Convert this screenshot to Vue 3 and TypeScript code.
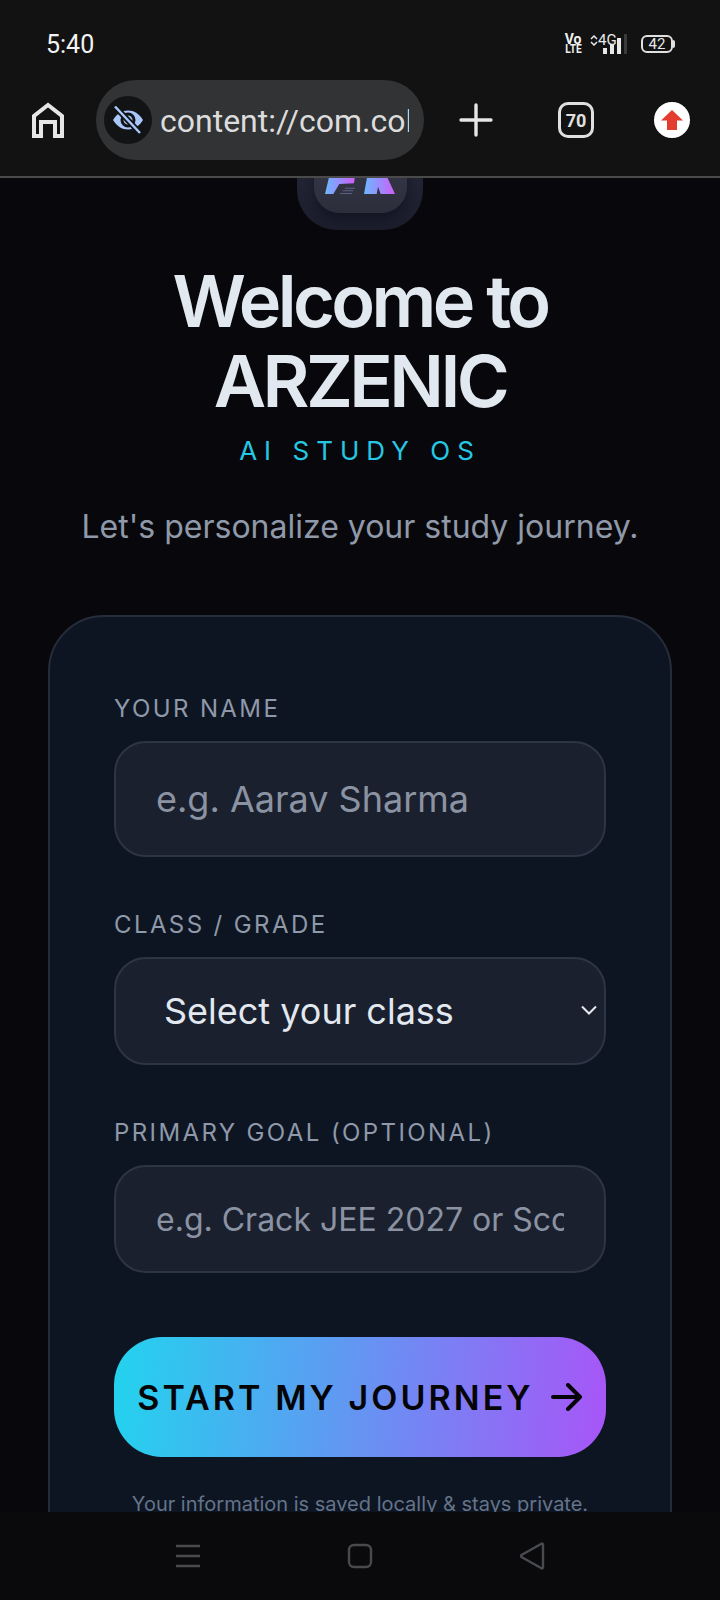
<template>
	<div class="phone">
		<!-- 상단 브라우저 바 -->
		<header class="browser">
			<div class="status">
				<span class="clock">5:40</span>
				<div class="indicators">
					<span class="volte"><b>Vo</b><b class="lte">LTE</b></span>
					<span class="updown">
						<svg width="8" height="11" viewBox="0 0 8 11"><path d="M1 4 4 1l3 3M1 7l3 3 3-3" fill="none" stroke="#e8e8e8" stroke-width="1.500" /></svg>
					</span>
					<div class="net">
						<span class="net-label">4G</span>
						<div class="bars">
							<i v-for="b in signalBars" :key="b" :style="{ height: b + 'px' }"></i>
						</div>
					</div>
					<i class="bar-off"></i>
					<div class="battery"><span>42</span></div>
				</div>
			</div>
			<div class="toolbar">
				<button class="tool home" aria-label="Home">
					<svg width="32" height="36" viewBox="0 0 32 36">
						<path d="M2 34V14L16 3l14 11v20h-7V20H9v14H2Z" fill="none" stroke="#e6e6e6" stroke-width="4" />
					</svg>
				</button>
				<div class="url">
					<span class="eye">
						<svg width="32" height="28" viewBox="0 0 32 28">
							<path d="M1 14C5 7.500 10 4.500 16 4.500S27 7.500 31 14c-4 6.500-9 9.500-15 9.500S5 20.500 1 14Z" fill="#a9c7fb" />
							<circle cx="16" cy="14" r="6" fill="none" stroke="#111315" stroke-width="3" />
							<path d="M3 0.500 28 27" stroke="#111315" stroke-width="6" />
							<path d="M3 0.500 28 27" stroke="#a9c7fb" stroke-width="2.400" />
						</svg>
					</span>
					<div class="url-text">content://com.col</div>
				</div>
				<button class="tool plus" aria-label="New tab">
					<svg width="34" height="34" viewBox="0 0 34 34">
						<path d="M17 2v30M2 17h30" stroke="#e6e6e6" stroke-width="3.400" stroke-linecap="round" />
					</svg>
				</button>
				<div class="tabs">70</div>
				<button class="tool update" aria-label="Update">
					<svg width="22" height="20" viewBox="0 0 22 20">
						<path d="M11 0 22 10.500H16V20H6V10.500H0Z" fill="#e23d2e" />
					</svg>
				</button>
			</div>
		</header>

		<!-- 온보딩 페이지 (스크롤된 상태) -->
		<main class="viewport">
			<div class="page">
				<div class="logo">
					<div class="logo-inner">
						<svg width="70" height="18" viewBox="0 0 70 18">
							<defs>
								<linearGradient id="lg" x1="0" y1="0" x2="1" y2="0">
									<stop offset="0" stop-color="#6db8ff" />
									<stop offset="0.5" stop-color="#9a8cff" />
									<stop offset="1" stop-color="#d05ef5" />
								</linearGradient>
							</defs>
							<path d="M4.300 0H30l-1 7.300-14.700.7L8.300 18H0Z" fill="url(#lg)" />
							<path d="M42.300 0h19.400L70 18H55.700L53 10.700 51.700 18H39Z" fill="url(#lg)" />
							<path d="M20 12.300h10M17.700 14.700H28M15 17.500h12" stroke="#5d5f86" stroke-width="1" />
						</svg>
					</div>
				</div>
				<h1 class="title">Welcome to<br />ARZENIC</h1>
				<p class="brand">AI STUDY OS</p>
				<p class="lead">Let's personalize your study journey.</p>

				<form class="card" @submit.prevent>
					<div class="field first">
						<label for="name">YOUR NAME</label>
						<input id="name" v-model="name" class="control tall big" type="text" placeholder="e.g. Aarav Sharma" />
					</div>
					<div class="field">
						<label for="grade">CLASS / GRADE</label>
						<div class="select-wrap">
							<select id="grade" v-model="grade" class="control big">
								<option value="">Select your class</option>
								<option v-for="g in grades" :key="g" :value="g">{{ g }}</option>
							</select>
							<svg class="chevron" width="18" height="12" viewBox="0 0 18 12">
								<path d="M2 2.500 9 9.500l7-7" fill="none" stroke="#e6e8ee" stroke-width="2" />
							</svg>
						</div>
					</div>
					<div class="field">
						<label for="goal">PRIMARY GOAL (OPTIONAL)</label>
						<input id="goal" v-model="goal" class="control" type="text" placeholder="e.g. Crack JEE 2027 or Score 95%" />
					</div>
					<button class="start" type="submit">
						<span>START MY JOURNEY</span>
						<svg width="32" height="28" viewBox="0 0 32 28">
							<path d="M2 14h27M17 2l12 12-12 12" fill="none" stroke="#050508" stroke-width="4" stroke-linecap="round" stroke-linejoin="round" />
						</svg>
					</button>
					<p class="note">Your information is saved locally &amp; stays private.</p>
				</form>
			</div>
		</main>

		<!-- 시스템 내비게이션 -->
		<nav class="sysnav">
			<svg width="26" height="24" viewBox="0 0 26 24">
				<path d="M1 2h24M1 12h24M1 22h24" stroke="#484a4e" stroke-width="2.400" />
			</svg>
			<svg width="26" height="26" viewBox="0 0 26 26">
				<rect x="2" y="2" width="22" height="22" rx="5" fill="none" stroke="#484a4e" stroke-width="2.400" />
			</svg>
			<svg width="26" height="28" viewBox="0 0 26 28">
				<path d="M24 2.500v23a1 1 0 0 1-1.600.700L2.500 15a1.300 1.300 0 0 1 0-2L22.400 1.800A1 1 0 0 1 24 2.500Z" fill="none" stroke="#484a4e" stroke-width="2.400" />
			</svg>
		</nav>
	</div>
</template>

<script setup lang="ts">
import { ref } from 'vue';

const name = ref('');
const grade = ref('');
const goal = ref('');

const signalBars = [6, 10, 16];
const grades = ['Class 9', 'Class 10', 'Class 11', 'Class 12', 'Dropper'];
</script>

<style>
html,
body {
	margin: 0;
	background: #08080c;
}
</style>

<style scoped>
.phone {
	width: 720px;
	height: 1600px;
	display: flex;
	flex-direction: column;
	overflow: hidden;
	font-family: Inter, 'Liberation Sans', sans-serif;
	background: #08080c;
}

.browser {
	flex: none;
	height: 178px;
	box-sizing: border-box;
	background: #121212;
	border-bottom: 2px solid #4a4a4a;
	font-family: Roboto, 'Liberation Sans', sans-serif;
	color: #e8e8e8;
}

.status {
	height: 80px;
	display: flex;
	align-items: center;
	justify-content: space-between;
	padding: 8px 47px 0 46px;
	box-sizing: border-box;
}

.clock {
	font-size: 25px;
	color: #f2f2f2;
}

.indicators {
	display: flex;
	align-items: center;
	height: 20px;
}

.volte {
	width: 16px;
	margin-right: 9px;
	display: flex;
	flex-direction: column;
	align-items: center;
	font-size: 14px;
	line-height: 10px;
	color: #f0f0f0;
}

.lte {
	font-size: 13px;
	transform: scaleX(0.78);
}

.updown {
	display: flex;
	margin-bottom: 7px;
}

.net {
	width: 23px;
	height: 20px;
}

.net-label {
	display: block;
	font-size: 15px;
	line-height: 12px;
	color: #e8e8e8;
}

.bars {
	display: flex;
	align-items: flex-end;
	justify-content: flex-end;
	gap: 3px;
	margin-top: -8px;
	height: 16px;
}

.bars i {
	display: block;
	width: 4px;
	background: #e8e8e8;
}

.bar-off {
	display: block;
	width: 3px;
	height: 20px;
	margin: 0 14px 0 3px;
	background: #3a3a3a;
}

.battery {
	width: 32px;
	height: 18px;
	box-sizing: border-box;
	border: 2px solid #e0e0e0;
	border-radius: 6px;
	display: flex;
	align-items: center;
	justify-content: center;
	font-size: 15px;
	position: relative;
}

.battery::after {
	content: '';
	position: absolute;
	right: -4px;
	top: 3px;
	width: 2px;
	height: 8px;
	background: #e0e0e0;
	border-radius: 0 2px 2px 0;
}

.toolbar {
	height: 80px;
	display: flex;
	align-items: center;
}

.tool {
	padding: 0;
	border: 0;
	background: none;
	display: flex;
	align-items: center;
	justify-content: center;
}

.home {
	width: 32px;
	height: 36px;
	margin: 0 32px;
}

.url {
	width: 328px;
	height: 80px;
	box-sizing: border-box;
	border-radius: 40px;
	background: #313335;
	display: flex;
	align-items: center;
	padding: 0 15px 0 8px;
}

.eye {
	flex: none;
	width: 48px;
	height: 48px;
	border-radius: 50%;
	background: #111315;
	display: flex;
	align-items: center;
	justify-content: center;
}

.url-text {
	flex: 1;
	min-width: 0;
	margin-left: 8px;
	padding-top: 2px;
	overflow: hidden;
	white-space: nowrap;
	font-size: 32px;
	color: #dcdcdc;
}

.plus {
	width: 34px;
	height: 34px;
	margin-left: 35px;
}

.tabs {
	width: 36px;
	height: 36px;
	box-sizing: border-box;
	margin-left: 65px;
	border: 3.500px solid #e0e0e0;
	border-radius: 10px;
	display: flex;
	align-items: center;
	justify-content: center;
	font-size: 18px;
	font-weight: 700;
	color: #e0e0e0;
}

.update {
	width: 36px;
	height: 36px;
	margin-left: 60px;
	border-radius: 50%;
	background: #fff;
}

.viewport {
	flex: 1;
	min-height: 0;
	overflow: hidden;
}

.page {
	margin-top: -72px;
	display: flex;
	flex-direction: column;
	align-items: center;
}

.logo {
	width: 126px;
	height: 124px;
	box-sizing: border-box;
	padding-top: 16px;
	border-radius: 40px;
	background: linear-gradient(180deg, #2b2d3e, #1b1c2c);
	display: flex;
	justify-content: center;
}

.logo-inner {
	width: 93px;
	height: 91px;
	box-sizing: border-box;
	padding-top: 54px;
	border-radius: 26px;
	background: linear-gradient(180deg, #3c3e4e, #2d2e3c);
	box-shadow: 0 6px 10px rgba(10, 10, 24, 0.45);
	display: flex;
	justify-content: center;
}

.logo-inner svg {
	display: block;
}

.title {
	margin: 31px 0 0;
	font-size: 72px;
	line-height: 80px;
	font-weight: 600;
	letter-spacing: -0.05em;
	text-align: center;
	color: #e2e8f0;
}

.brand {
	margin: 12px 0 0;
	font-size: 26px;
	line-height: 36px;
	letter-spacing: 0.27em;
	color: #25c8e4;
}

.lead {
	margin: 38px 0 0;
	font-size: 32px;
	line-height: 40px;
	color: #8f99a9;
}

.card {
	width: 624px;
	box-sizing: border-box;
	margin-top: 68px;
	padding: 76px 64px 80px;
	border: 2px solid #262c3a;
	border-radius: 56px;
	background: #0e1522;
}

.field {
	margin-bottom: 52px;
}

label {
	display: block;
	margin-bottom: 17px;
	font-size: 24px;
	line-height: 31px;
	letter-spacing: 0.1em;
	color: #8f99a9;
}

.control {
	display: block;
	width: 100%;
	height: 108px;
	box-sizing: border-box;
	padding: 0 40px;
	border: 2px solid #2d3545;
	border-radius: 32px;
	background: #1a202e;
	font-family: inherit;
	font-size: 32px;
	color: #e2e8f0;
	outline: none;
	appearance: none;
}

.control.tall {
	height: 116px;
}

.control.big {
	font-size: 36px;
}

select.control {
	padding-left: 48px;
}

.control::placeholder {
	color: #8b93a3;
	opacity: 1;
}

.select-wrap {
	position: relative;
}

.chevron {
	position: absolute;
	right: 8px;
	top: 47px;
}

.start {
	width: 100%;
	height: 120px;
	margin-top: 64px;
	border: 0;
	border-radius: 48px;
	background: linear-gradient(95deg, #22d3ee, #a855f7);
	display: flex;
	align-items: center;
	justify-content: center;
	gap: 17px;
	font-family: inherit;
	font-size: 34px;
	font-weight: 600;
	letter-spacing: 0.09em;
	color: #050508;
}

.note {
	margin: 33px 0 0;
	font-size: 20px;
	line-height: 28px;
	text-align: center;
	color: #64748b;
}

.sysnav {
	flex: none;
	height: 88px;
	background: #0a0a0d;
	display: flex;
	align-items: center;
	justify-content: center;
	gap: 146px;
}
</style>
